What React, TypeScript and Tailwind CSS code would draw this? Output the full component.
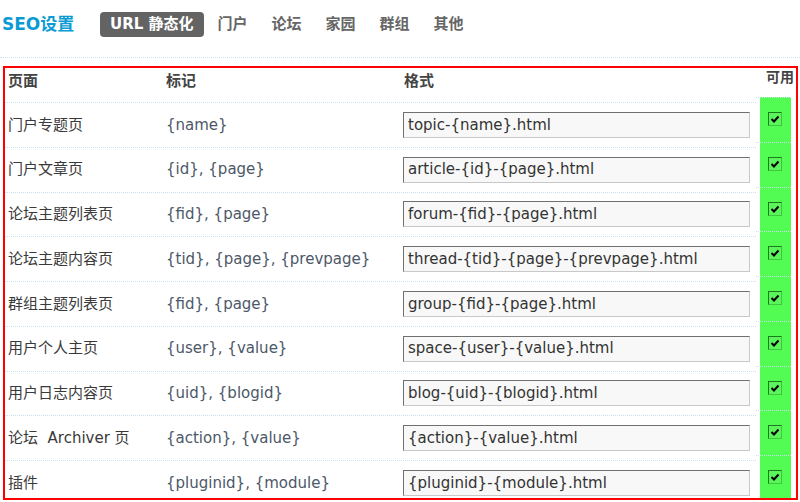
const rows = [
  { page: '门户专题页', mark: '{name}', format: 'topic-{name}.html' },
  { page: '门户文章页', mark: '{id}, {page}', format: 'article-{id}-{page}.html' },
  { page: '论坛主题列表页', mark: '{fid}, {page}', format: 'forum-{fid}-{page}.html' },
  { page: '论坛主题内容页', mark: '{tid}, {page}, {prevpage}', format: 'thread-{tid}-{page}-{prevpage}.html' },
  { page: '群组主题列表页', mark: '{fid}, {page}', format: 'group-{fid}-{page}.html' },
  { page: '用户个人主页', mark: '{user}, {value}', format: 'space-{user}-{value}.html' },
  { page: '用户日志内容页', mark: '{uid}, {blogid}', format: 'blog-{uid}-{blogid}.html' },
  { page: '论坛\u00a0 Archiver 页', mark: '{action}, {value}', format: '{action}-{value}.html' },
  { page: '插件', mark: '{pluginid}, {module}', format: '{pluginid}-{module}.html' },
]

const tabs = ['门户', '论坛', '家园', '群组', '其他']

function CheckBox() {
  return (
    <span className="flex h-[14px] w-[14px] items-center justify-center border border-t-[#1d7a1d] border-l-[#1d7a1d] border-r-[#3fc83f] border-b-[#3fc83f] bg-[#5af55a]">
      <svg width="10" height="10" viewBox="0 0 10 10">
        <path d="M1.5 5 L4 7.5 L8.5 2.5" fill="none" stroke="#000" strokeWidth="2" />
      </svg>
    </span>
  )
}

export default function App() {
  return (
    <div className="h-[502px] w-[800px] overflow-hidden bg-white font-['DejaVu_Sans','Noto_Sans_CJK_SC',sans-serif]">
      {/* top nav */}
      <div className="mt-[12px] flex h-[25px] items-center pl-[2px]">
        <span className="w-[98px] text-[17px] font-bold text-[#0b9bd3]">SEO设置</span>
        <div className="flex items-center gap-[4px]">
          <span className="flex h-[25px] items-center rounded-[4px] bg-[#636363] px-[10px] text-[15px] font-bold text-white">
            URL 静态化
          </span>
          {tabs.map(t => (
            <span key={t} className="px-[10px] text-[15px] font-bold text-[#666]">{t}</span>
          ))}
        </div>
      </div>
      <div className="mt-[20px] border-t border-dotted border-[#c9e0ee]" />

      {/* settings table */}
      <div className="ml-[3px] mt-[8px] box-border flex h-[434px] w-[795px] overflow-hidden border-2 border-[#ff0000]">
        <div className="flex w-[751px] flex-col">
          <div className="flex h-[34px] shrink-0 pt-[3px] text-[15px] font-bold leading-[20px] text-[#444]">
            <span className="w-[158px] pl-[3px]">页面</span>
            <span className="w-[237px] pl-[3px]">标记</span>
            <span className="w-[356px] pl-[4px]">格式</span>
          </div>
          {rows.map(r => (
            <div key={r.page} className="flex h-[44.75px] shrink-0 items-center border-t border-dotted border-[#c9e0ee] text-[15px]">
              <span className="w-[158px] whitespace-nowrap pl-[3px] text-[#3a3a3a]">{r.page}</span>
              <span className="w-[237px] whitespace-nowrap pl-[3px] text-[#4c5868]">{r.mark}</span>
              <span className="w-[356px] pl-[3px]">
                <span className="flex h-[26px] w-[347px] items-center border border-t-[#707070] border-l-[#707070] border-r-[#c8c8c8] border-b-[#c8c8c8] bg-[#f8f8f8] pl-[4px] text-[#333]">
                  {r.format}
                </span>
              </span>
            </div>
          ))}
        </div>

        <div className="flex w-[35px] shrink-0 flex-col">
          <div className="h-[29px] shrink-0 whitespace-nowrap pl-[10px] pt-[1px] text-[14px] font-bold leading-[17px] text-[#444]">
            可用
          </div>
          {rows.map(r => (
            <div key={r.page} className="h-[44.75px] shrink-0 border-t border-dotted border-[#c9e0ee] bg-[linear-gradient(to_right,transparent_4px,#52fc52_4px)] pl-[12px] pt-[14px]">
              <CheckBox />
            </div>
          ))}
        </div>
      </div>
    </div>
  )
}
